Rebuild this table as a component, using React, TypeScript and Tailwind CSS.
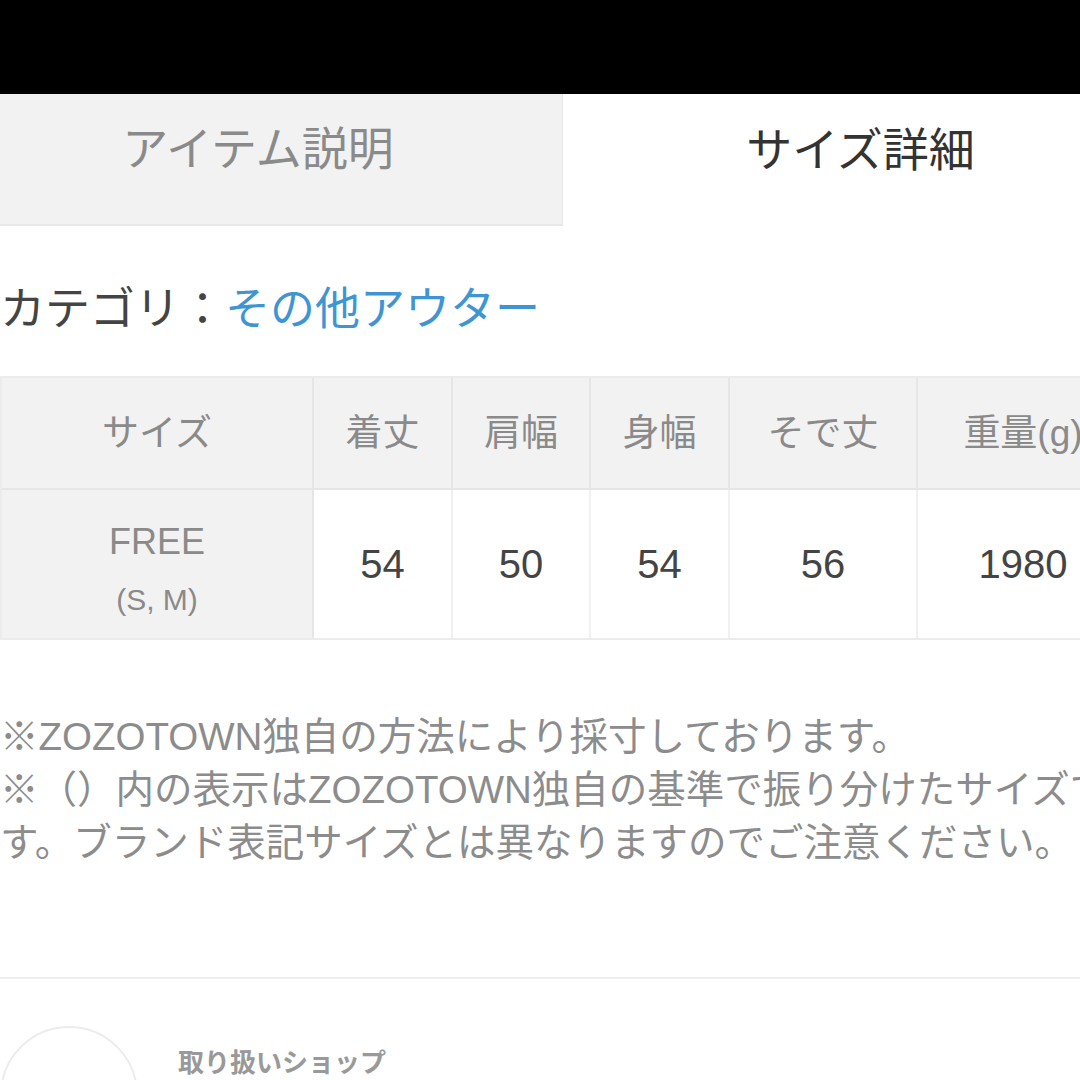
const headers = ["サイズ", "着丈", "肩幅", "身幅", "そで丈", "重量(g)"];
const values = ["54", "50", "54", "56", "1980"];
const widths = ["w-[312px]", "w-[139px]", "w-[138px]", "w-[139px]", "w-[188px]", "w-[212px]"];

export default function App() {
  return (
    <div
      className="w-[1080px] h-[1080px] overflow-hidden bg-white"
      style={{ fontFamily: '"Liberation Sans", "Noto Sans CJK JP", sans-serif' }}
    >
      <div className="h-[94px] bg-black" />

      {/* tabs */}
      <div className="flex h-[132px]">
        <div className="w-[563px] bg-[#f2f2f2] border-r border-b-2 border-[#e8e8e8] flex items-center justify-center pr-[46px] pb-[20px] text-[46px] text-[#8a8a8a]">
          アイテム説明
        </div>
        <div className="flex-1 flex items-center justify-center pl-[78px] pb-[20px] text-[46px] text-[#333]">
          サイズ詳細
        </div>
      </div>

      {/* category */}
      <p className="mt-[51px] text-[45px] leading-[66px] text-[#444] whitespace-nowrap">
        カテゴリ：<span className="text-[#3f95d4]">その他アウター</span>
      </p>

      {/* size table */}
      <div className="mt-[33px] w-[1128px] border-t-2 border-l-2 border-[#ececec]">
        <div className="flex h-[112px] bg-[#f2f2f2] border-b-2 border-[#e6e6e6]">
          {headers.map((h, i) => (
            <div
              key={h}
              className={`${widths[i]} shrink-0 flex items-center justify-center pt-[2px] text-[37px] text-[#8a8a8a] border-r-2 border-[#e6e6e6]`}
            >
              {h}
            </div>
          ))}
        </div>
        <div className="flex h-[150px] border-b-2 border-[#ececec]">
          <div className="w-[312px] shrink-0 bg-[#f2f2f2] border-r-2 border-[#e6e6e6] flex flex-col items-center justify-center pt-[16px] text-[#8a8a8a]">
            <span className="text-[36px] leading-[56px]">FREE</span>
            <span className="text-[30px] leading-[60px]">(S, M)</span>
          </div>
          {values.map((v, i) => (
            <div
              key={i}
              className={`${widths[i + 1]} shrink-0 flex items-center justify-center text-[40px] text-[#444] border-r-2 border-[#f0f0f0]`}
            >
              {v}
            </div>
          ))}
        </div>
      </div>

      {/* notes */}
      <div className="mt-[70px] text-[38.5px] leading-[53px] text-[#8c8c8c] whitespace-nowrap">
        <p>※ZOZOTOWN独自の方法により採寸しております。</p>
        <p>※（）内の表示はZOZOTOWN独自の基準で振り分けたサイズで</p>
        <p>す。ブランド表記サイズとは異なりますのでご注意ください。</p>
      </div>

      <div className="mt-[108px] border-t-2 border-[#eeeeee]" />

      {/* shop */}
      <div className="mt-[47px] flex items-start gap-[40px]">
        <div className="w-[138px] h-[138px] shrink-0 rounded-full border-2 border-[#ececec]" />
        <p className="mt-[18px] text-[26px] text-[#999] font-semibold">取り扱いショップ</p>
      </div>
    </div>
  );
}
